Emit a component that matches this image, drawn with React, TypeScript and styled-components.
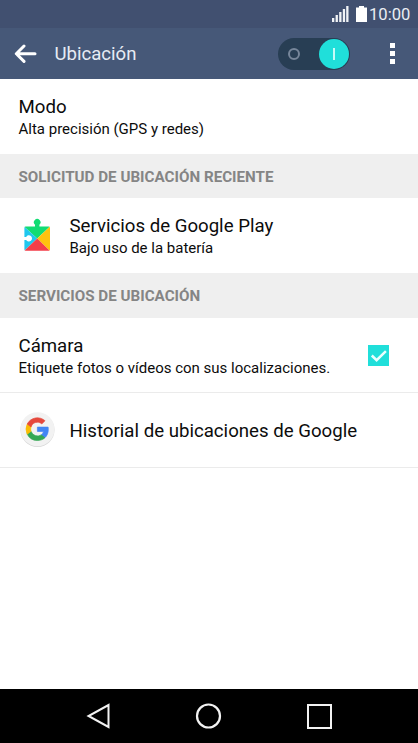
import React from 'react';
import styled, { createGlobalStyle } from 'styled-components';

const Global = createGlobalStyle`
  * { box-sizing: border-box; }
  body { margin: 0; background: #fff; }
`;

const Screen = styled.div`
  width: 418px;
  height: 743px;
  display: flex;
  flex-direction: column;
  overflow: hidden;
  background: #fff;
  color: #0c0c0c;
  font-family: Roboto, sans-serif;
`;

const StatusBar = styled.div`
  height: 28px;
  display: flex;
  justify-content: flex-end;
  align-items: center;
  padding: 1px 8px 0 0;
  background: #415070;
  color: #e9edf3;
`;

const StatusIcons = styled.span`
  display: flex;
  gap: 7px;
  padding-bottom: 1px;
`;

const Clock = styled.span`
  width: 41px;
  margin-left: 2.5px;
  padding-top: 1px;
  font-size: 16.6px;
  line-height: 20px;
  white-space: nowrap;
`;

const AppBar = styled.header`
  height: 51px;
  display: flex;
  align-items: center;
  padding: 0 14px 0 14px;
  background: #465878;
`;

const Title = styled.h1`
  margin: 0 auto 0 17.5px;
  color: #e6ebf4;
  font-size: 18.6px;
  font-weight: 400;
  line-height: 24px;
`;

const Toggle = styled.div`
  width: 72px;
  height: 32px;
  display: flex;
  align-items: center;
  justify-content: space-between;
  padding: 0 1px 0 10px;
  margin-right: 31px;
  border-radius: 16px;
  background: #283e54;
`;

const OffMark = styled.span`
  width: 12px;
  height: 12px;
  border: 2px solid #77869a;
  border-radius: 50%;
`;

const Knob = styled.span`
  width: 30px;
  height: 30px;
  display: flex;
  align-items: center;
  justify-content: center;
  border-radius: 50%;
  background: #20dfda;
`;

const OnMark = styled.span`
  width: 2px;
  height: 12px;
  background: #c8faf7;
`;

const Row = styled.div<{ $line?: boolean }>`
  height: 75px;
  display: flex;
  align-items: center;
  padding: 0 29px 0 18.5px;
  border-bottom: ${p => (p.$line ? '1px solid #ebebeb' : 'none')};
`;

const IconSlot = styled.span`
  width: 51px;
  display: flex;
  flex: none;
  padding-bottom: 1.5px;
`;

const Texts = styled.div`
  flex: 1;
  padding-top: 2px;
  white-space: nowrap;
`;

const Primary = styled.div`
  font-size: 18.65px;
  line-height: 24px;
`;

const Secondary = styled.div`
  font-size: 15px;
  line-height: 21px;
`;

const SectionHeader = styled.h2<{ $height: number }>`
  height: ${p => p.$height}px;
  margin: 0;
  padding-left: 18.5px;
  background: #efefef;
  color: #858585;
  font-size: 15.2px;
  font-weight: 700;
  line-height: 47px;
`;

const CheckBox = styled.span`
  width: 21px;
  height: 21px;
  display: flex;
  flex: none;
  background: #20dfda;
`;

const NavBar = styled.nav`
  height: 54px;
  display: flex;
  align-items: center;
  justify-content: center;
  gap: 82px;
  margin-top: auto;
  background: #000;
`;

const SignalIcon = () => (
  <svg width="17" height="16" viewBox="0 0 17 16" fill="#f1f3f6">
    <path d="M0 12h2.3v4H0zM3.6 9h2.3v7H3.6zM7.2 6h2.3v10H7.2zM10.8 3h2.3v13h-2.3zM14.2 0h2.3v16h-2.3z" />
  </svg>
);

const BatteryIcon = () => (
  <svg width="11" height="16" viewBox="0 0 11 16" fill="#fff">
    <path d="M3 0h5v1.500h3V16H0V1.500h3z" />
  </svg>
);

const BackArrow = () => (
  <svg width="23" height="20" viewBox="0 0 23 20" fill="none" stroke="#fff" strokeWidth="3" strokeLinecap="round" strokeLinejoin="round">
    <path d="M21 9.700H2.500M10 2 2.300 9.700 10 17.400" />
  </svg>
);

const MoreIcon = () => (
  <svg width="23" height="23" viewBox="0 0 23 23" fill="#fff">
    <path d="M9 1h5v5H9zM9 9h5v5H9zM9 17h5v5H9z" />
  </svg>
);

const PlayServicesIcon = () => (
  <svg width="36" height="34" viewBox="0 0 36 34">
    <defs>
      <clipPath id="puzzle">
        <path d="M6.700 8.500H16V6.700a3.300 3.300 0 1 1 4.400 0V8.500H29.700q1.300 0 1.300 1.300V31.400q0 1.300-1.300 1.300H6.700q-1.300 0-1.300-1.300V21.900H7.200a3.100 3.100 0 1 0 0-3H5.400V9.800Q5.400 8.500 6.700 8.500z" />
      </clipPath>
    </defs>
    <g clipPath="url(#puzzle)">
      <path fill="#12dc73" d="M5 0h26v8.500L18.200 20.600 5 8.500z" />
      <path fill="#20c7ee" d="M5 8.500l13.200 12.100L5 33z" />
      <path fill="#ffc20f" d="M31 8.500 18.200 20.600 31 33z" />
      <path fill="#f43e49" d="M5 33 18.200 20.600 31 33z" />
    </g>
  </svg>
);

const GoogleIcon = () => (
  <svg width="38" height="38" viewBox="0 0 38 38">
    <circle cx="18.500" cy="20" r="17" fill="#d6d6d6" />
    <circle cx="18.500" cy="19.200" r="17" fill="#f2f2f2" />
    <g transform="translate(7 7.700) scale(.95)" strokeWidth=".7">
      <path fill="#4285f4" stroke="#4285f4" d="M23.500 12.300c0-.8-.1-1.600-.2-2.400H12v4.600h6.400a5.500 5.500 0 0 1-2.400 3.600v3h3.900c2.300-2.100 3.600-5.200 3.600-8.800z" />
      <path fill="#34a853" stroke="#34a853" d="M12 24c3.200 0 6-1.100 7.900-2.900l-3.900-3a7.200 7.200 0 0 1-10.700-3.800h-4v3.100A12 12 0 0 0 12 24z" />
      <path fill="#fbbc05" stroke="#fbbc05" d="M5.300 14.300a7.200 7.200 0 0 1 0-4.600V6.600h-4a12 12 0 0 0 0 10.800z" />
      <path fill="#e5483d" stroke="#e5483d" d="M12 4.800c1.800 0 3.400.6 4.600 1.800L20 3.200A12 12 0 0 0 1.300 6.600l4 3.100A7.100 7.100 0 0 1 12 4.800z" />
    </g>
  </svg>
);

export default function App() {
  return (
    <Screen>
      <Global />
      <StatusBar>
        <StatusIcons><SignalIcon /><BatteryIcon /></StatusIcons>
        <Clock>10:00</Clock>
      </StatusBar>
      <AppBar>
        <BackArrow />
        <Title>Ubicación</Title>
        <Toggle><OffMark /><Knob><OnMark /></Knob></Toggle>
        <MoreIcon />
      </AppBar>
      <Row>
        <Texts>
          <Primary>Modo</Primary>
          <Secondary>Alta precisión (GPS y redes)</Secondary>
        </Texts>
      </Row>
      <SectionHeader $height={44}>SOLICITUD DE UBICACIÓN RECIENTE</SectionHeader>
      <Row>
        <IconSlot><PlayServicesIcon /></IconSlot>
        <Texts>
          <Primary>Servicios de Google Play</Primary>
          <Secondary>Bajo uso de la batería</Secondary>
        </Texts>
      </Row>
      <SectionHeader $height={45}>SERVICIOS DE UBICACIÓN</SectionHeader>
      <Row $line>
        <Texts>
          <Primary>Cámara</Primary>
          <Secondary>Etiquete fotos o vídeos con sus localizaciones.</Secondary>
        </Texts>
        <CheckBox>
          <svg width="21" height="21" viewBox="0 0 21 21" fill="none" stroke="#e9fffe" strokeWidth="2.500">
            <path d="m3.800 10.500 4.800 4.700 9.300-9.100" />
          </svg>
        </CheckBox>
      </Row>
      <Row $line>
        <IconSlot><GoogleIcon /></IconSlot>
        <Texts><Primary>Historial de ubicaciones de Google</Primary></Texts>
      </Row>
      <NavBar>
        <svg width="28" height="28" viewBox="0 0 28 28" fill="none" stroke="#f2f2f2" strokeWidth="2">
          <path d="M23.500 3v22L3.500 14z" />
        </svg>
        <svg width="28" height="28" viewBox="0 0 28 28" fill="none" stroke="#f2f2f2" strokeWidth="2.200">
          <circle cx="13.500" cy="14" r="11.500" />
        </svg>
        <svg width="28" height="28" viewBox="0 0 28 28" fill="none" stroke="#f2f2f2" strokeWidth="2">
          <path d="M3 3h23v23H3z" />
        </svg>
      </NavBar>
    </Screen>
  );
}
